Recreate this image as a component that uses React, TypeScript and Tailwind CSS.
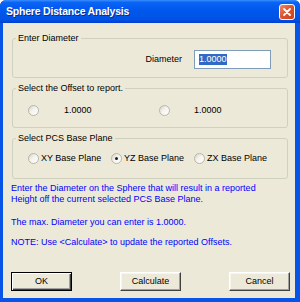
import React from "react";

const font = { fontFamily: '"Liberation Sans", Arial, sans-serif' };

function Radio({ checked }: { checked?: boolean }) {
  return (
    <span className="relative inline-block w-[11px] h-[11px] shrink-0 rounded-full border border-[#b8b6a8] bg-[linear-gradient(135deg,#d6d4c8_0%,#f4f3ee_45%,#ffffff_100%)]">
      {checked && (
        <span className="absolute left-[3px] top-[3px] w-[3px] h-[3px] rounded-full bg-[#222]" />
      )}
    </span>
  );
}

function Btn({ label, def }: { label: string; def?: boolean }) {
  return (
    <button
      className={
        "w-[61px] h-[19px] text-[9px] leading-none text-black bg-[#ece9d8] border " +
        (def
          ? "border-[#000] shadow-[inset_1px_1px_0_#ffffff,inset_-1px_-1px_0_#404040,inset_-2px_-2px_0_#a0a0a0]"
          : "border-t-[#ffffff] border-l-[#ffffff] border-r-[#404040] border-b-[#404040] shadow-[inset_-1px_-1px_0_#a0a0a0,inset_1px_1px_0_#f6f5f0]")
      }
      style={font}
    >
      {label}
    </button>
  );
}

export default function App() {
  return (
    <div
      className="w-[300px] h-[302px] flex flex-col bg-[#0754e6] rounded-t-[6px] overflow-hidden"
      style={font}
    >
      {/* Title bar */}
      <div className="h-[23px] shrink-0 flex items-center justify-between pl-[6px] pr-[5px] bg-[linear-gradient(to_bottom,#3c8ffc_0%,#0a64f4_10%,#0058ee_45%,#0052e4_85%,#003fd0_100%)]">
        <span className="text-white font-bold text-[10.5px] tracking-[-0.2px] [text-shadow:1px_1px_0_#0a2a90]">
          Sphere Distance Analysis
        </span>
        <span className="w-[16px] h-[16px] rounded-[3px] border border-white bg-[linear-gradient(135deg,#f08a6c_0%,#e0552f_45%,#c8401c_100%)] flex items-center justify-center">
          <svg width="10" height="10" viewBox="0 0 10 10">
            <path d="M2 2 L8 8 M8 2 L2 8" stroke="#fff" strokeWidth="1.8" strokeLinecap="round" />
          </svg>
        </span>
      </div>

      {/* Client */}
      <div className="flex-1 ml-[3px] mr-[5px] mb-[4px] bg-[#ece9d8] flex flex-col pl-[9px] pr-[7px] text-[9px] text-black">
        {/* Group 1 */}
        <fieldset className="mt-[10px] h-[45px] border border-[#d0d0bf] rounded-[3px]">
          <legend className="ml-[3px] px-[2px] leading-[11px]">Enter Diameter</legend>
          <div className="flex items-center justify-end pr-[16px] pt-[6px]">
            <span className="mr-[12px]">Diameter</span>
            <div className="w-[77px] h-[19px] border border-[#7f9db9] bg-white flex items-center pl-[4px]">
              <span className="bg-[#316ac5] text-white leading-[11px] px-[0px]">1.0000</span>
            </div>
          </div>
        </fieldset>

        {/* Group 2 */}
        <fieldset className="mt-[5px] h-[45px] border border-[#d0d0bf] rounded-[3px]">
          <legend className="ml-[3px] px-[2px] leading-[11px]">Select the Offset to report.</legend>
          <div className="flex items-center h-[13px] mt-[10px] pl-[15px]">
            <div className="w-[131px] flex items-center">
              <Radio />
              <span className="ml-[25px]">1.0000</span>
            </div>
            <div className="flex items-center">
              <Radio />
              <span className="ml-[24px]">1.0000</span>
            </div>
          </div>
        </fieldset>

        {/* Group 3 */}
        <fieldset className="mt-[5px] h-[46px] border border-[#d0d0bf] rounded-[3px]">
          <legend className="ml-[3px] px-[2px] leading-[11px]">Select PCS Base Plane</legend>
          <div className="flex items-center h-[13px] mt-[8px] pl-[15px]">
            <div className="w-[83px] flex items-center">
              <Radio />
              <span className="ml-[2px]">XY Base Plane</span>
            </div>
            <div className="w-[83px] flex items-center">
              <Radio checked />
              <span className="ml-[2px]">YZ Base Plane</span>
            </div>
            <div className="flex items-center">
              <Radio />
              <span className="ml-[2px]">ZX Base Plane</span>
            </div>
          </div>
        </fieldset>

        {/* Info text */}
        <div className="-ml-[1px] text-[#0000ff] leading-[11px]">
          <p className="mt-[4px]">
            Enter the Diameter on the Sphere that will result in a reported
            <br />
            Height off the current selected PCS Base Plane.
          </p>
          <p className="mt-[12px]">The max. Diameter you can enter is 1.0000.</p>
          <p className="mt-[9px]">NOTE: Use &lt;Calculate&gt; to update the reported Offsets.</p>
        </div>

        {/* Buttons */}
        <div className="mt-auto mb-[7px] -ml-[1px] mr-[-2px] flex justify-between">
          <Btn label="OK" def />
          <Btn label="Calculate" />
          <Btn label="Cancel" />
        </div>
      </div>
    </div>
  );
}
